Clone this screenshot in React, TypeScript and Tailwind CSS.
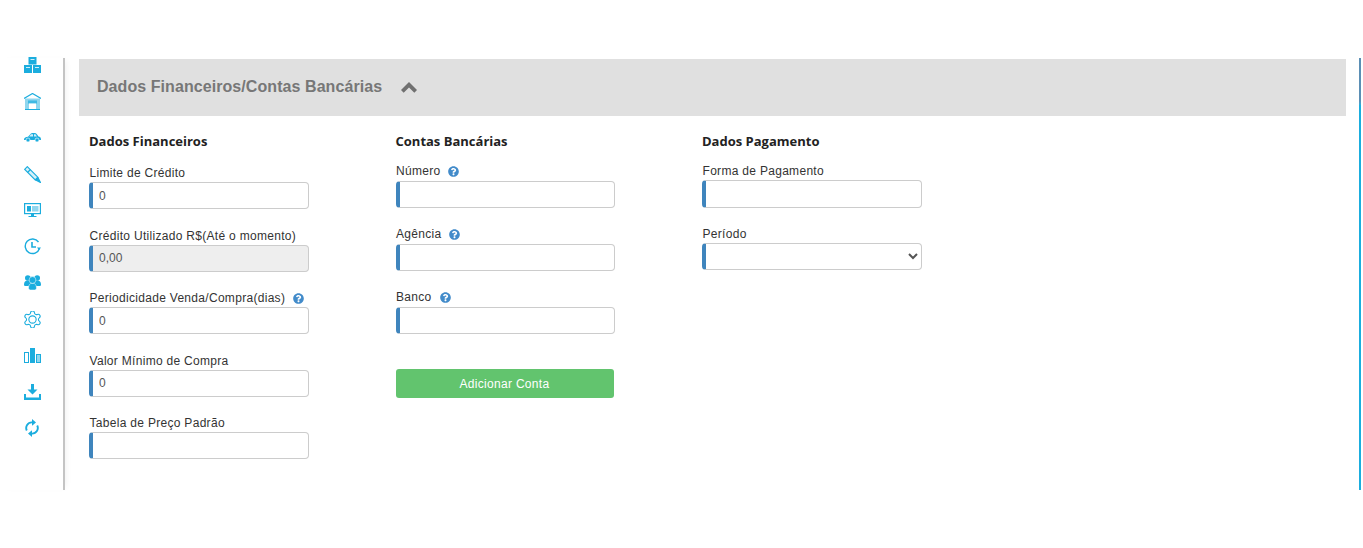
import { FaQuestionCircle } from 'react-icons/fa';

const CYAN = '#1badde';
const INPUT = 'block rounded-[4px] border border-[#ccc] border-l-[4px] border-l-[#3f85bd] pl-[6px] text-[12px] text-[#555] outline-none';
const LABEL = 'flex items-center pl-[0.5px] text-[12px] leading-[16px] text-[#333] tracking-[0.3px]';
const TITLE = "font-['Open_Sans'] text-[13px] leading-[17px] font-bold text-[#222]";

function Boxes() {
  return (
    <svg width="17" height="16" viewBox="0 0 17 16">
      <rect x="4.5" y="0" width="8" height="7.5" fill={CYAN} />
      <rect x="0" y="8" width="8" height="8" fill={CYAN} />
      <rect x="9" y="8" width="8" height="8" fill={CYAN} />
      <rect x="6.5" y="2" width="4" height="1" fill="#cfeef8" />
      <rect x="2" y="10" width="4" height="1" fill="#cfeef8" />
      <rect x="11" y="10" width="4" height="1" fill="#cfeef8" />
    </svg>
  );
}

function Garage() {
  return (
    <svg width="17" height="17" viewBox="0 0 17 17">
      <path d="M1 5.500h15V16.500H1z" fill="#8fd6ee" />
      <path d="M0 5.500 8.500 0.500 17 5.500" fill="none" stroke={CYAN} strokeWidth="1.200" />
      <rect x="1" y="16" width="15" height="1" fill={CYAN} />
      <rect x="4" y="7.500" width="9" height="3" fill={CYAN} opacity="0.7" />
      <rect x="5" y="10.500" width="7" height="5.500" fill="#fff" />
    </svg>
  );
}

function Car() {
  return (
    <svg width="17" height="9" viewBox="0 0 17 9">
      <path d="M0 6.500C0 4.500 2 4 4 3.700L6.500 1C7 .4 8 0 9 0h1.500c1 0 1.800.4 2.400 1.200L14.500 3.500C16 3.800 17 4.500 17 6.500V7H0Z" fill={CYAN} />
      <path d="M7 1.200h2v2.300H5.200ZM10 1.200h1.500l1.500 2.300h-3Z" fill="#cfeef8" />
      <circle cx="4" cy="7" r="2" fill={CYAN} stroke="#fff" strokeWidth=".6" />
      <circle cx="13" cy="7" r="2" fill={CYAN} stroke="#fff" strokeWidth=".6" />
    </svg>
  );
}

function Pen() {
  return (
    <svg width="17" height="17" viewBox="0 0 17 17" fill="none" stroke={CYAN} strokeWidth="1.200">
      <path d="M.7 3.300 3.300.7 13.800 11.200 11.200 13.800Z" fill="#d5f0f9" />
      <path d="M11.200 13.800 16.500 16.500 13.800 11.200" fill={CYAN} />
      <path d="M3.500 6.500l3-3" />
    </svg>
  );
}

function Monitor() {
  return (
    <svg width="17" height="14" viewBox="0 0 17 14">
      <rect x=".6" y=".6" width="15.800" height="10" fill="none" stroke={CYAN} strokeWidth="1.200" />
      <rect x="3" y="3" width="4" height="5.500" fill={CYAN} />
      <rect x="8" y="3" width="6.500" height="5.500" fill="#8fd6ee" />
      <rect x="7" y="11" width="3" height="2" fill={CYAN} />
      <rect x="4.500" y="13" width="8" height="1" fill={CYAN} />
    </svg>
  );
}

function Clock() {
  return (
    <svg width="17" height="17" viewBox="0 0 17 17" fill="none" stroke={CYAN} strokeWidth="1.400">
      <path d="M15.500 10.500A7.300 7.300 0 1 1 14.500 4" />
      <path d="M8 4v5h4" strokeWidth="1.600" />
      <path d="M13 9.500h4l-2 2.500Z" fill={CYAN} stroke="none" />
    </svg>
  );
}

function Users() {
  return (
    <svg width="17" height="15" viewBox="0 0 17 15" fill={CYAN}>
      <circle cx="3.800" cy="3" r="2.800" />
      <circle cx="13.200" cy="3" r="2.800" />
      <path d="M0 9.500C0 7 1.500 5.500 3.500 5.500h10C15.500 5.500 17 7 17 9.500c0 1-.6 1.500-1.500 1.500h-14C.6 11 0 10.500 0 9.500Z" />
      <circle cx="8.500" cy="5" r="3.400" fill={CYAN} stroke="#fff" strokeWidth=".5" />
      <path d="M4.500 13C4.500 10 6 8.500 7 8.500h3c1 0 2.500 1.500 2.500 4.500 0 1.200-1 2-2 2h-4c-1 0-2-.8-2-2Z" stroke="#fff" strokeWidth=".5" />
    </svg>
  );
}

function Gear() {
  return (
    <svg width="17" height="17" viewBox="2 2 20 20" fill="none" stroke={CYAN} strokeWidth="1.300">
      <path d="M9.671 4.136a2.34 2.34 0 0 1 4.659 0 2.34 2.34 0 0 0 3.319 1.915 2.34 2.34 0 0 1 2.33 4.033 2.34 2.34 0 0 0 0 3.831 2.34 2.34 0 0 1-2.33 4.033 2.34 2.34 0 0 0-3.319 1.915 2.34 2.34 0 0 1-4.659 0 2.34 2.34 0 0 0-3.32-1.915 2.34 2.34 0 0 1-2.33-4.033 2.34 2.34 0 0 0 0-3.831A2.34 2.34 0 0 1 6.350 6.051a2.34 2.34 0 0 0 3.319-1.915" />
      <circle cx="12" cy="12" r="4.300" />
    </svg>
  );
}

function Bars() {
  return (
    <svg width="17" height="15" viewBox="0 0 17 15">
      <rect x=".5" y="4.500" width="4" height="10" fill="none" stroke={CYAN} />
      <rect x="6" y="0" width="5" height="15" fill={CYAN} />
      <rect x="12.500" y="6.500" width="4" height="8" fill="#8fd6ee" stroke={CYAN} />
    </svg>
  );
}

function Download() {
  return (
    <svg width="17" height="16" viewBox="0 0 17 16" fill={CYAN}>
      <path d="M7 0h3v5.500h3.500L8.500 10.500 3.500 5.500H7Z" />
      <path d="M0 10h2v3.500h13V10h2v6H0Z" />
    </svg>
  );
}

function Refresh() {
  return (
    <svg width="14" height="18" viewBox="0 0 14 18" fill="none" stroke={CYAN} strokeWidth="1.900">
      <path d="M1.800 11.500A5.600 5.600 0 0 1 7 3.400" />
      <path d="M12.200 6.500A5.600 5.600 0 0 1 7 14.600" />
      <path d="M7 0v6.800L11 3.400Z" fill={CYAN} stroke="none" />
      <path d="M7 11.200V18L3 14.600Z" fill={CYAN} stroke="none" />
    </svg>
  );
}

function Chevron() {
  return (
    <svg width="16" height="11" viewBox="0 0 16 11" className="ml-[19px] mt-[2px]" fill="#707070">
      <path d="M8 0 16 8 13.300 10.700 8 5.400 2.700 10.700 0 8Z" />
    </svg>
  );
}

function Field({ label, hint, value, disabled, width = 'w-[220px]', gap = 'mt-[1px]', height = 'h-[27px]' }: { label: string; hint?: boolean; value?: string; disabled?: boolean; width?: string; gap?: string; height?: string }) {
  return (
    <div>
      <label className={LABEL}>
        {label}
        {hint && <FaQuestionCircle className="ml-[8px] text-[11px] text-[#428bca]" />}
      </label>
      <input
        readOnly
        disabled={disabled}
        value={value ?? ''}
        className={`${INPUT} ${width} ${gap} ${height} ${disabled ? 'bg-[#eee]' : 'bg-white'}`}
      />
    </div>
  );
}

export default function App() {
  const icons = [
    <Boxes />, <Garage />, <Car />, <Pen />, <Monitor />, <Clock />, <Users />,
    <Gear />, <Bars />, <Download />, <Refresh />,
  ];

  return (
    <div className="h-[548px] w-[1363px] overflow-hidden bg-white pt-[58px] font-['Liberation_Sans',Arial,sans-serif] flex items-start">
      <aside className="w-[65px] h-[432px] border-r-[2px] border-[#c4c4c4] shrink-0 flex flex-col shadow-[4px_0_6px_-3px_rgba(0,0,0,0.06)]">
        {icons.map((icon, i) => (
          <div key={i} className="h-[36.300px] shrink-0 pl-[1px] flex items-center justify-center first:mt-[-11px]">{icon}</div>
        ))}
      </aside>

      <main className="ml-[14px] w-[1267px] shrink-0 pt-[1px]">
        <div className="h-[57px] bg-[#e0e0e0] pl-[18px] pb-[2px] flex items-center text-[#777]">
          <h2 className="text-[16px] font-bold tracking-[0.07px]">Dados Financeiros/Contas Bancárias</h2>
          <Chevron />
        </div>

        <div className="flex pl-[10px] pt-[17px]">
          <section className="w-[306.500px]">
            <h3 className={TITLE}>Dados Financeiros</h3>
            <div className="mt-[15px] flex flex-col gap-[18.500px]">
              <Field label="Limite de Crédito" value="0" />
              <Field label="Crédito Utilizado R$(Até o momento)" value="0,00" disabled />
              <Field label="Periodicidade Venda/Compra(dias)" value="0" hint />
              <Field label="Valor Mínimo de Compra" value="0" />
              <Field label="Tabela de Preço Padrão" />
            </div>
          </section>

          <section className="w-[306.500px]">
            <h3 className={TITLE}>Contas Bancárias</h3>
            <div className="mt-[13px] flex flex-col gap-[18px]">
              <Field label="Número" hint width="w-[219px]" gap="mt-[2px]" />
              <Field label="Agência" hint width="w-[219px]" gap="mt-[2px]" />
              <Field label="Banco" hint width="w-[219px]" gap="mt-[2px]" />
            </div>
            <button className="mt-[35px] block h-[29px] w-[218px] rounded-[3px] bg-[#62c46e] text-[12px] tracking-[0.3px] text-white">Adicionar Conta</button>
          </section>

          <section>
            <h3 className={TITLE}>Dados Pagamento</h3>
            <div className="mt-[13px] flex flex-col gap-[18px]">
              <Field label="Forma de Pagamento" height="h-[28px]" />
              <div>
                <label className={LABEL}>Período</label>
                <select className={`${INPUT} mt-[1px] h-[27px] w-[220px] bg-white`} />
              </div>
            </div>
          </section>
        </div>
      </main>

      <div className="ml-[13px] w-[2px] h-[432px] shrink-0 bg-gradient-to-b from-[#5b8fb5] from-[10%] to-[#1badde] to-[11%]" />
    </div>
  );
}
